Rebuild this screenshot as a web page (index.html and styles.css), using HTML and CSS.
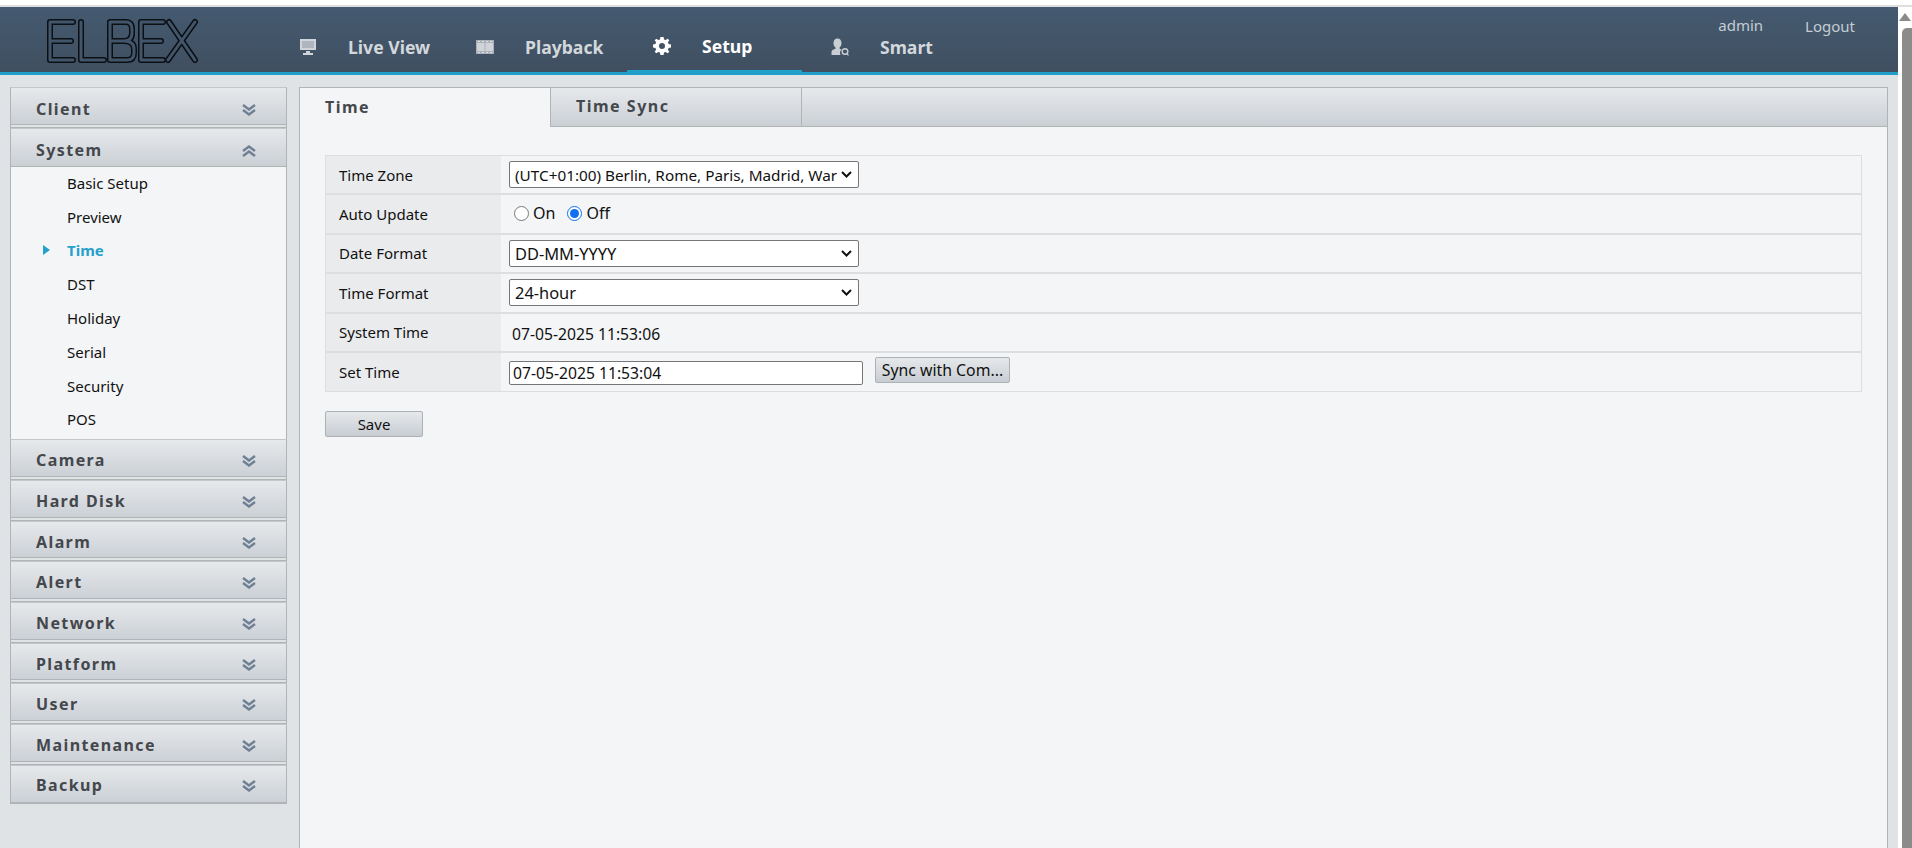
FILE: index.html
```html
<!DOCTYPE html>
<html lang="en">
<head>
<meta charset="utf-8">
<title>Setup - Time</title>
<link rel="stylesheet" href="styles.css">
</head>
<body>
<div class="topstrip"></div>
<div class="window">
  <div class="app">
    <header class="header">
      <svg class="logo" viewBox="0 0 156 50" width="156" height="50">
        <g class="logo-o">
          <path d="M29 7H6V45H29M6 26H27"/><path d="M37 7V45H60"/><path d="M66 7H82Q88 7 88 14V18Q88 26 80 26Q90 26 90 34V38Q90 45 83 45H66ZM66 26H80"/><path d="M119 7H97V45H119M97 26H117"/><path d="M124 45L151 7M125 7L151 45"/>
        </g>
        <g class="logo-i">
          <path d="M29 7H6V45H29M6 26H27"/><path d="M37 7V45H60"/><path d="M66 7H82Q88 7 88 14V18Q88 26 80 26Q90 26 90 34V38Q90 45 83 45H66ZM66 26H80"/><path d="M119 7H97V45H119M97 26H117"/><path d="M124 45L151 7M125 7L151 45"/>
        </g>
      </svg>
      <nav class="nav">
        <a class="nav-item nav-live">
          <svg class="nav-icon" viewBox="0 0 18 18"><path d="M1 1H17V12H1Z" fill="#d0d4d8"/><path d="M7 13H11V15H14V17H4V15H7Z" fill="#d0d4d8"/><path d="M3 3H15V10H3Z" fill="#aeb5bc"/></svg>
          <span>Live View</span>
        </a>
        <a class="nav-item nav-play">
          <svg class="nav-icon" viewBox="0 0 20 18"><path d="M1 2H19V16H1Z" fill="#aab1b8"/><path d="M2 5H9.5V13H2ZM10.5 5H18V13H10.5Z" fill="#d0d4d8"/><path d="M3 3H5V4H3ZM7 3H9V4H7ZM11 3H13V4H11ZM15 3H17V4H15ZM3 14H5V15H3ZM7 14H9V15H7ZM11 14H13V15H11ZM15 14H17V15H15Z" fill="#dfe2e5"/></svg>
          <span>Playback</span>
        </a>
        <a class="nav-item nav-setup active">
          <svg class="nav-icon" viewBox="0 0 18 18"><path fill-rule="evenodd" fill="#fff" d="M7.4 0H10.6L11 2.4L12.7 3.1L14.7 1.7L16.3 3.3L14.9 5.3L15.6 7L18 7.4V10.6L15.6 11L14.9 12.7L16.3 14.7L14.7 16.3L12.7 14.9L11 15.6L10.6 18H7.4L7 15.6L5.3 14.9L3.3 16.3L1.7 14.7L3.1 12.7L2.4 11L0 10.6V7.4L2.4 7L3.1 5.3L1.7 3.3L3.3 1.7L5.3 3.1L7 2.4ZM9 6A3 3 0 1 0 9 12A3 3 0 1 0 9 6Z"/></svg>
          <span>Setup</span>
        </a>
        <a class="nav-item nav-smart">
          <svg class="nav-icon" viewBox="0 0 18 18"><path fill="#c9ced3" d="M6.5 0.5C9 0.5 10.5 2.5 10.5 5C10.5 7 9.7 8.5 8.6 9.5V10.8L10.5 11.6A4.8 4.8 0 0 0 9.5 17H0.5V14C0.5 12.8 1.3 12 2.5 11.5L4.5 10.8V9.5C3.3 8.5 2.5 7 2.5 5C2.5 2.5 4 0.5 6.5 0.5Z"/><circle cx="14" cy="13.5" r="2.8" fill="none" stroke="#c9ced3" stroke-width="1.4"/><path d="M15.8 15.6L17.5 17.4" stroke="#c9ced3" stroke-width="1.2"/></svg>
          <span>Smart</span>
        </a>
      </nav>
      <div class="user">
        <span class="user-name">admin</span>
        <span class="user-logout">Logout</span>
      </div>
    </header>
    <main class="main">
      <aside class="sidebar">
        <div class="sec"><span>Client</span><svg class="chev" viewBox="0 0 14 12"><path d="M1 1L7 5.5L13 1M1 6L7 10.5L13 6"/></svg></div>
        <div class="sec sec-open"><span>System</span><svg class="chev" viewBox="0 0 14 12"><path d="M1 6L7 1.5L13 6M1 11L7 6.5L13 11"/></svg></div>
        <ul class="sub">
          <li>Basic Setup</li>
          <li>Preview</li>
          <li class="cur">Time</li>
          <li>DST</li>
          <li>Holiday</li>
          <li>Serial</li>
          <li>Security</li>
          <li>POS</li>
        </ul>
        <div class="sec"><span>Camera</span><svg class="chev" viewBox="0 0 14 12"><path d="M1 1L7 5.5L13 1M1 6L7 10.5L13 6"/></svg></div>
        <div class="sec"><span>Hard Disk</span><svg class="chev" viewBox="0 0 14 12"><path d="M1 1L7 5.5L13 1M1 6L7 10.5L13 6"/></svg></div>
        <div class="sec"><span>Alarm</span><svg class="chev" viewBox="0 0 14 12"><path d="M1 1L7 5.5L13 1M1 6L7 10.5L13 6"/></svg></div>
        <div class="sec"><span>Alert</span><svg class="chev" viewBox="0 0 14 12"><path d="M1 1L7 5.5L13 1M1 6L7 10.5L13 6"/></svg></div>
        <div class="sec"><span>Network</span><svg class="chev" viewBox="0 0 14 12"><path d="M1 1L7 5.5L13 1M1 6L7 10.5L13 6"/></svg></div>
        <div class="sec"><span>Platform</span><svg class="chev" viewBox="0 0 14 12"><path d="M1 1L7 5.5L13 1M1 6L7 10.5L13 6"/></svg></div>
        <div class="sec"><span>User</span><svg class="chev" viewBox="0 0 14 12"><path d="M1 1L7 5.5L13 1M1 6L7 10.5L13 6"/></svg></div>
        <div class="sec"><span>Maintenance</span><svg class="chev" viewBox="0 0 14 12"><path d="M1 1L7 5.5L13 1M1 6L7 10.5L13 6"/></svg></div>
        <div class="sec sec-last"><span>Backup</span><svg class="chev" viewBox="0 0 14 12"><path d="M1 1L7 5.5L13 1M1 6L7 10.5L13 6"/></svg></div>
      </aside>
      <section class="panel">
        <div class="tabs">
          <div class="tab tab-on">Time</div>
          <div class="tab tab-off">Time Sync</div>
          <div class="tab-rest"></div>
        </div>
        <div class="body">
          <div class="form">
            <div class="row">
              <div class="lab">Time Zone</div>
              <div class="val"><select class="ctl ctl-zone"><option>(UTC+01:00) Berlin, Rome, Paris, Madrid, Warsaw</option></select></div>
            </div>
            <div class="row">
              <div class="lab">Auto Update</div>
              <div class="val val-radio">
                <label class="rad"><input type="radio" name="auto"><span>On</span></label>
                <label class="rad"><input type="radio" name="auto" checked><span>Off</span></label>
              </div>
            </div>
            <div class="row">
              <div class="lab">Date Format</div>
              <div class="val"><select class="ctl"><option>DD-MM-YYYY</option></select></div>
            </div>
            <div class="row">
              <div class="lab">Time Format</div>
              <div class="val"><select class="ctl"><option>24-hour</option></select></div>
            </div>
            <div class="row">
              <div class="lab">System Time</div>
              <div class="val val-text">07-05-2025 11:53:06</div>
            </div>
            <div class="row row-last">
              <div class="lab">Set Time</div>
              <div class="val val-set">
                <input class="txt" type="text" value="07-05-2025 11:53:04">
                <button class="btn btn-sync" type="button">Sync with Com...</button>
              </div>
            </div>
          </div>
          <button class="btn btn-save" type="button">Save</button>
        </div>
      </section>
    </main>
  </div>
  <div class="scrollbar">
    <div class="sb-up"></div>
    <div class="sb-thumb"></div>
  </div>
</div>
</body>
</html>
```
FILE: styles.css
```css
* { box-sizing: border-box; }
html, body { margin: 0; height: 848px; overflow: hidden; background: #fff; }
body { font-family: "Noto Sans", "Open Sans", sans-serif; font-size: 15px; color: #111; }

.topstrip { height: 7px; border-bottom: 2px solid #dedede; background: #fff; }
.window { display: flex; height: 841px; }
.app { flex: 1; min-width: 0; display: flex; flex-direction: column; background: #dfe3e6; }

.header {
  height: 68px; flex: none; display: flex; position: relative;
  background: linear-gradient(#445a70, #404f60);
  border-bottom: 3px solid #1f9fca;
}
.logo { flex: none; margin: 8px 0 0 44px; }
.logo path { fill: none; stroke-linecap: round; stroke-linejoin: round; }
.logo-o path { stroke: #0c0f14; stroke-width: 6; }
.logo-i path { stroke: #42566b; stroke-width: 3; }

.nav { display: flex; margin-left: 99px; font-size: 17.6px; font-weight: 700; color: #d3d8dd; }
.nav-item { display: flex; align-items: center; height: 65px; padding-top: 15px; }
.nav-icon { width: 18px; height: 18px; flex: none; }
.nav-live { width: 176px; }
.nav-live span { margin-left: 31px; }
.nav-play { width: 152px; }
.nav-play .nav-icon { width: 20px; }
.nav-play span { margin-left: 30px; }
.nav-setup { width: 175px; padding-left: 26px; color: #fff; border-bottom: 2px solid #1f9fca; }
.nav-setup span { margin-left: 31px; }
.nav-smart { margin-left: 29px; }
.nav-smart span { margin-left: 31px; }

.user { margin-left: auto; padding: 8px 43px 0 0; display: flex; gap: 42px; font-size: 15px; color: #c5ccd3; align-items: flex-start; }
.user-logout { padding-top: 1px; }

.main { flex: 1; min-height: 0; display: flex; gap: 12px; padding: 12px 10px 0; }

.sidebar { width: 277px; flex: none; }
.sec {
  height: 40.7px; display: flex; align-items: center; justify-content: space-between;
  padding: 1px 30px 0 25px; border: 1px solid #b1b4b7; border-top-color: #c4c7ca;
  box-shadow: inset 0 -2px 0 #dfe3e6, inset 0 -3px 0 #b1b4b7;
  background: linear-gradient(#e6e9eb, #cbd0d6 94%, #dfe3e6 94%);
  font-size: 16px; font-weight: 700; color: #44474c; letter-spacing: 1.4px;
}
.sec:first-child { padding-top: 3px; }
.sec-open, .sec-last { box-shadow: none; background: linear-gradient(#e6e9eb, #cbd0d6); }
.sec-open { height: 39.3px; padding-top: 5px; }
.sec-last { height: 39.5px; padding-top: 1px; border-bottom: 2px solid #b1b4b7; }
.chev { width: 14px; height: 12px; margin-top: 2px; }
.chev path { fill: none; stroke: #6f8094; stroke-width: 2.4; }

.sub {
  list-style: none; margin: 0; padding: 0 0 2px 56px;
  background: #f4f5f7; border: 1px solid #b1b4b7; border-width: 0 1px;
}
.sub li { height: 33.8px; display: flex; align-items: center; padding-bottom: 2px; }
.sub .cur { color: #26a0cb; font-weight: 700; position: relative; }
.sub .cur::before {
  content: ""; position: absolute; left: -24px; top: 10px;
  border-left: 7px solid #26a0cb; border-top: 5px solid transparent; border-bottom: 5px solid transparent;
}

.panel { flex: 1; min-width: 0; background: #f4f5f7; border: 1px solid #b1b4b7; border-bottom: 0; }
.tabs { display: flex; height: 39px; }
.tab { display: flex; align-items: center; font-size: 16px; font-weight: 700; color: #44474c; letter-spacing: 1.5px; padding: 0 0 2px 25px; }
.tab-on { width: 250px; }
.tab-off { width: 251px; }
.tab-off, .tab-rest { background: linear-gradient(#e6e9eb, #cbd0d6); border-bottom: 1px solid #b1b4b7; border-left: 1px solid #b1b4b7; }
.tab-rest { flex: 1; }

.body { padding: 28px 25px 0; }
.form { border: 1px solid #dcdee0; }
.row { height: 39.4px; display: flex; border-bottom: 2px solid #dcdee0; }
.row-last { height: 38.4px; border-bottom: 0; }
.lab { width: 175px; flex: none; display: flex; align-items: center; padding: 0 0 0 13px; background: #eaebed; }
.val { flex: 1; display: flex; align-items: center; padding-left: 8px; }

.ctl {
  appearance: none; width: 350px; height: 27px; font: inherit; font-size: 16.4px; color: #111;
  background: #fff url("data:image/svg+xml,%3Csvg xmlns='http://www.w3.org/2000/svg' width='11' height='7'%3E%3Cpath d='M1 1L5.5 5.5L10 1' fill='none' stroke='%23111' stroke-width='2'/%3E%3C/svg%3E") no-repeat right 6px center;
  border: 1px solid #767676; border-radius: 2px; padding: 0 19px 0 5px;
}
.ctl-zone { font-size: 15.3px; padding-right: 21px; }
.val-radio { gap: 12px; padding: 0 0 2px 13px; }
.rad { display: flex; align-items: center; gap: 4px; font-size: 16px; }
.rad input { width: 15px; height: 15px; margin: 1px 0 0; accent-color: #0f6ff0; }
.val-text { padding: 4px 0 0 11px; font-size: 15.7px; }
.val-set { padding: 2px 0 0 8px; }
.txt { width: 354px; height: 24px; font: inherit; font-size: 15.7px; color: #111; padding: 0 3px; background: #fff; border: 1px solid #767676; border-radius: 2px; }

.btn {
  font: inherit; color: #111; padding: 0; height: 26px;
  border: 1px solid #aeb1b4; border-radius: 2px;
  background: linear-gradient(#e6e9eb, #c8cdd3);
}
.btn-sync { width: 135px; margin: -7px 0 0 12px; font-size: 15.8px; }
.btn-save { display: block; width: 98px; margin-top: 19px; }

.scrollbar { width: 14px; flex: none; background: #fff; position: relative; display: flex; flex-direction: column; align-items: flex-end; }
.sb-up { width: 0; height: 0; margin: 6px 0 0; border-left: 6px solid transparent; border-right: 6px solid transparent; border-bottom: 8px solid #8a8a8a; align-self: center; }
.sb-thumb { flex: 1; width: 10px; margin-top: 7px; background: #8b8b8b; border-radius: 5px 0 0 0; }
```
